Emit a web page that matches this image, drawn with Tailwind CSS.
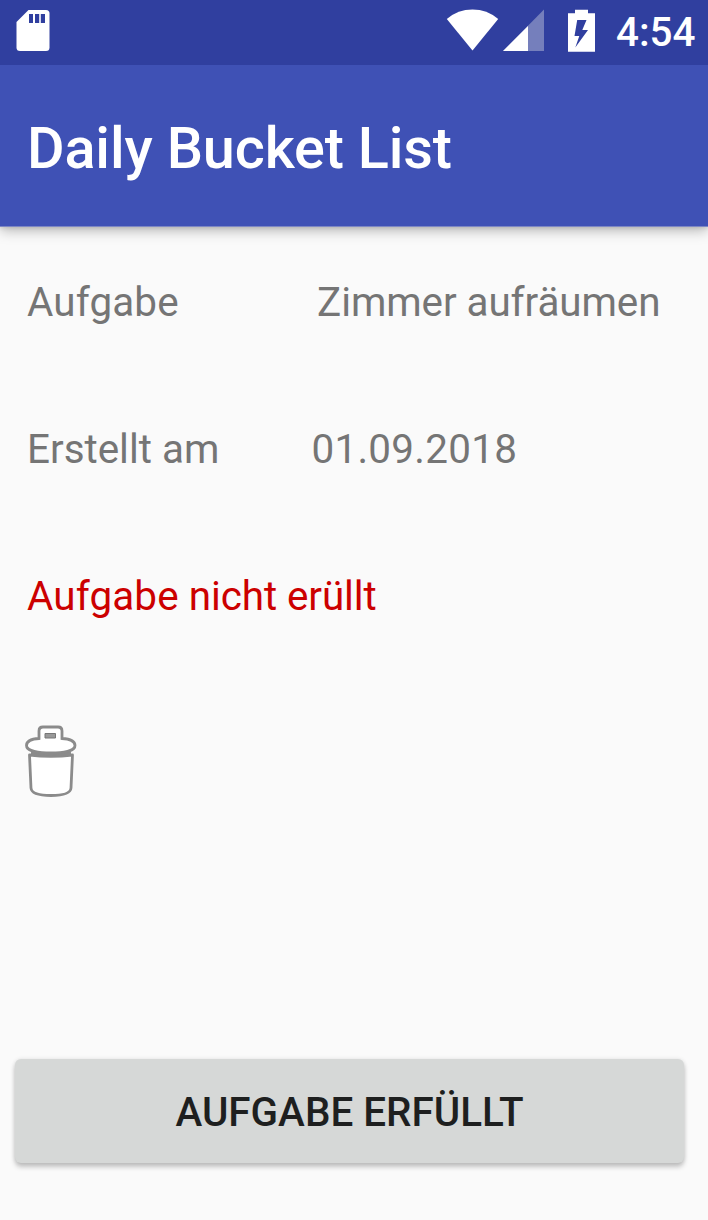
<!DOCTYPE html>
<html lang="de">
<head>
<meta charset="utf-8">
<title>Daily Bucket List</title>
<script src="https://cdn.jsdelivr.net/npm/@tailwindcss/browser@4"></script>
</head>
<body class="bg-[#fafafa]">
<div class="flex h-[1220px] w-[708px] flex-col overflow-hidden bg-[#fafafa] font-['Roboto',sans-serif] text-[40.4px] leading-[48px] text-[#757575]">
  <div class="z-20 flex h-[65px] shrink-0 items-start bg-[#303f9f] text-white">
    <svg class="ml-4 mt-[9px] h-[43px] w-[34px] shrink-0" viewBox="0 0 34 43" fill="none">
      <path d="M12.5 1H30Q33.500 1 33.500 4.500V38.500Q33.500 42 30 42H4Q.5 42 .5 38.500V13Z" fill="#fff"/>
      <path d="M13 5h4v9h-4zM19 5h4v9h-4zM25 5h4v9h-4z" fill="#303f9f"/>
      <path d="M23 5h2v9h-2z" fill="#d5d8ec"/>
    </svg>
    <div class="flex-1"></div>
    <svg class="mt-[9px] h-[43px] w-[152px] shrink-0" viewBox="446 9 152 43" fill="none">
      <path d="M446.800 19Q458 9.600 472.500 9.600T498.200 19L472.500 50.500Z" fill="#fff"/>
      <path d="M544 9.500V51H503Z" fill="#757fbc"/>
      <path d="M528 26V51H503Z" fill="#fff"/>
      <path d="M575 9.800H588V13.200H595V51.700H568V13.200H575Z" fill="#fff"/>
      <path d="M577.200 20H586.500L582.300 30H588L575.300 47.500L579.300 36H574.500Z" fill="#303f9f"/>
    </svg>
    <span class="ml-[18px] mr-[12px] mt-[9px] w-[80px] whitespace-nowrap font-medium">4:54</span>
  </div>
  <header class="z-10 flex h-[162px] shrink-0 items-center border-b border-[#7d87c4] bg-[#3f51b5] pl-[27px] pt-[6px] text-[57.600px] font-medium leading-[68px] tracking-[-0.15px] text-white shadow-[0_4px_12px_rgba(0,0,0,0.26),0_1px_4px_rgba(0,0,0,0.1)]">
    <h1 class="whitespace-nowrap">Daily Bucket List</h1>
  </header>
  <main class="flex flex-1 flex-col pt-[2px]">
    <div class="flex h-[147px] items-center whitespace-nowrap pl-[27px]"><span class="w-[290px] tracking-[0.15px]">Aufgabe</span><span class="tracking-[-0.07px]">Zimmer aufräumen</span></div>
    <div class="flex h-[147px] items-center whitespace-nowrap pl-[27px]"><span class="w-[284.500px]">Erstellt am</span><span class="tracking-[0.27px]">01.09.2018</span></div>
    <div class="flex h-[147px] items-center whitespace-nowrap pl-[27px] text-[#cc0000]"><span class="tracking-[0.15px]">Aufgabe</span><span class="whitespace-pre tracking-[-0.08px]"> nicht erüllt</span></div>
    <svg class="ml-[24px] mt-[54px] h-[76px] w-[54px] shrink-0" viewBox="24 724 54 76" fill="none" stroke="#8b8b8b" stroke-width="2.800">
      <path d="M29.500 755L31 788Q31.500 795.500 51 795.500T71 788L72.500 755Q51 757.500 29.500 755Z" fill="#fff" stroke-linejoin="round"/>
      <path d="M31 753Q51 755.500 71 753" stroke-width="3"/>
      <path d="M39 738.500V731Q39 727 43 727H58Q62 727 62 731V738.500C70 739 75 741.500 75 745.500C75 751 63 753 51 753S26.500 751 26.500 745.500C26.500 741.500 31 739 39 738.500Z" fill="#fff"/>
      <path d="M45 733.500H55.500V738H45Z" fill="#999" stroke="#777" stroke-width="1"/>
    </svg>
    <button class="ml-[15px] mr-[24px] mt-auto mb-[57px] h-[104px] rounded-[6px] bg-[#d6d8d7] pt-[3px] text-center font-medium text-[#1e1f1f] shadow-[0_4px_5px_rgba(0,0,0,0.22),0_0_4px_rgba(0,0,0,0.1)]">AUFGABE ERFÜLLT</button>
  </main>
</div>
</body>
</html>
